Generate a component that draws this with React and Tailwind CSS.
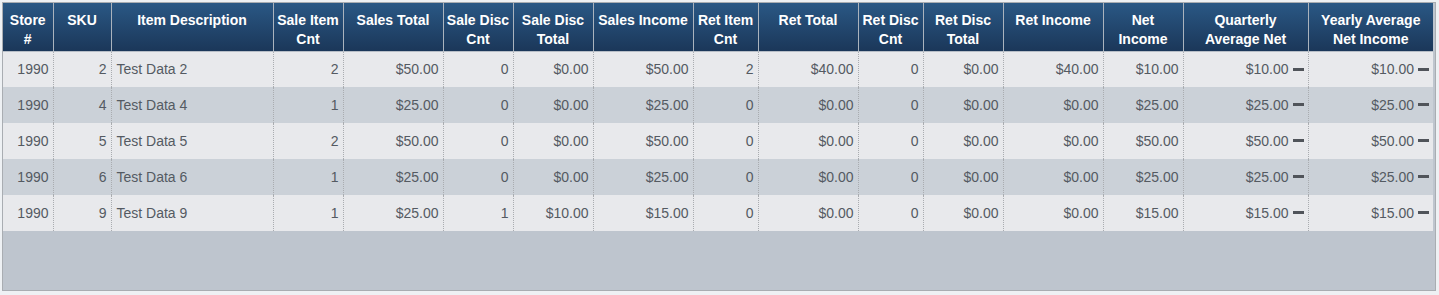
import React from 'react';

const columns = [
  { key: 'store', label: ['Store', '#'], width: 50 },
  { key: 'sku', label: ['SKU'], width: 58 },
  { key: 'desc', label: ['Item Description'], width: 162, left: true },
  { key: 'saleCnt', label: ['Sale Item', 'Cnt'], width: 70 },
  { key: 'salesTotal', label: ['Sales Total'], width: 100 },
  { key: 'discCnt', label: ['Sale Disc', 'Cnt'], width: 70 },
  { key: 'discTotal', label: ['Sale Disc', 'Total'], width: 80 },
  { key: 'salesIncome', label: ['Sales Income'], width: 100 },
  { key: 'retCnt', label: ['Ret Item', 'Cnt'], width: 65 },
  { key: 'retTotal', label: ['Ret Total'], width: 100 },
  { key: 'retDiscCnt', label: ['Ret Disc', 'Cnt'], width: 65 },
  { key: 'retDiscTotal', label: ['Ret Disc', 'Total'], width: 80 },
  { key: 'retIncome', label: ['Ret Income'], width: 100 },
  { key: 'net', label: ['Net', 'Income'], width: 80 },
  { key: 'quarterly', label: ['Quarterly', 'Average Net'], width: 125, dash: true },
  { key: 'yearly', label: ['Yearly Average', 'Net Income'], width: 125, dash: true },
];

const rows = [
  ['1990', '2', 'Test Data 2', '2', '$50.00', '0', '$0.00', '$50.00', '2', '$40.00', '0', '$0.00', '$40.00', '$10.00', '$10.00', '$10.00'],
  ['1990', '4', 'Test Data 4', '1', '$25.00', '0', '$0.00', '$25.00', '0', '$0.00', '0', '$0.00', '$0.00', '$25.00', '$25.00', '$25.00'],
  ['1990', '5', 'Test Data 5', '2', '$50.00', '0', '$0.00', '$50.00', '0', '$0.00', '0', '$0.00', '$0.00', '$50.00', '$50.00', '$50.00'],
  ['1990', '6', 'Test Data 6', '1', '$25.00', '0', '$0.00', '$25.00', '0', '$0.00', '0', '$0.00', '$0.00', '$25.00', '$25.00', '$25.00'],
  ['1990', '9', 'Test Data 9', '1', '$25.00', '1', '$10.00', '$15.00', '0', '$0.00', '0', '$0.00', '$0.00', '$15.00', '$15.00', '$15.00'],
];

export default function App() {
  return (
    <div className="min-h-[295px] bg-[#eef1f4] pt-[2px] pl-[2px]" style={{ fontFamily: '"Liberation Sans", Arial, sans-serif' }}>
      <div className="w-[1434px] h-[289px] border border-[#a9adb2] bg-[#bec5ce]">
        <table className="table-fixed border-collapse w-[1430px]">
          <colgroup>
            {columns.map((c) => (
              <col key={c.key} style={{ width: c.width }} />
            ))}
          </colgroup>
          <thead>
            <tr className="bg-gradient-to-b from-[#2a5885] to-[#1b3759]">
              {columns.map((c, i) => (
                <th
                  key={c.key}
                  className={`h-[48px] align-top pt-[8px] px-0 text-center text-[14px] leading-[19px] font-bold text-white border-b border-b-[#b7bec7] ${i < columns.length - 1 ? 'border-r border-r-[#aab3bd]' : ''}`}
                >
                  {c.label.map((l, j) => (
                    <div key={j} className="whitespace-nowrap">{l}</div>
                  ))}
                </th>
              ))}
            </tr>
          </thead>
          <tbody>
            {rows.map((r, ri) => (
              <tr key={ri} className={ri % 2 === 0 ? 'bg-[#e8e9ec]' : 'bg-[#cbd1d8]'}>
                {r.map((v, ci) => {
                  const c = columns[ci];
                  return (
                    <td
                      key={ci}
                      className={`h-[36px] text-[14px] text-[#545a62] whitespace-nowrap ${c.left ? 'text-left pl-[5px]' : 'text-right pr-[4px]'} ${ci < columns.length - 1 ? 'border-r border-dotted border-r-[#a9acb0]' : ''}`}
                    >
                      {v}
                      {c.dash && <span className="inline-block w-[11px] h-[3px] bg-[#50545a] ml-[4px] align-middle mb-[2px]" />}
                    </td>
                  );
                })}
              </tr>
            ))}
          </tbody>
        </table>
      </div>
    </div>
  );
}
